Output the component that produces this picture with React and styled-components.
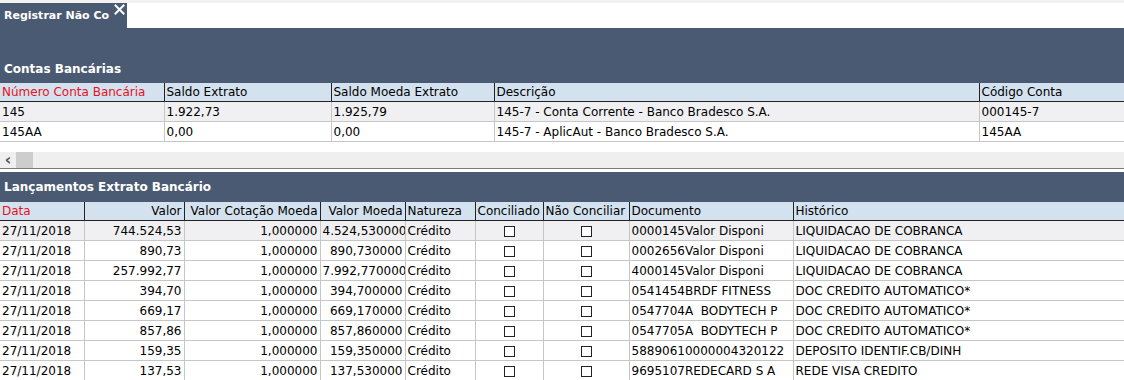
import React from 'react';
import styled, { createGlobalStyle } from 'styled-components';

const GlobalStyle = createGlobalStyle`
  body {
    margin: 0;
    background: #ffffff;
    font-family: 'DejaVu Sans', 'Noto Sans', sans-serif;
    color: #000;
  }
`;

const contas = [
  ['145', '1.922,73', '1.925,79', '145-7 - Conta Corrente - Banco Bradesco S.A.', '000145-7'],
  ['145AA', '0,00', '0,00', '145-7 - AplicAut - Banco Bradesco S.A.', '145AA'],
];

const lancamentos = [
  ['744.524,53', '4.524,530000', '0000145Valor Disponi', 'LIQUIDACAO DE COBRANCA'],
  ['890,73', '890,730000', '0002656Valor Disponi', 'LIQUIDACAO DE COBRANCA'],
  ['257.992,77', '7.992,770000', '4000145Valor Disponi', 'LIQUIDACAO DE COBRANCA'],
  ['394,70', '394,700000', '0541454BRDF FITNESS', 'DOC CREDITO AUTOMATICO*'],
  ['669,17', '669,170000', '0547704A  BODYTECH P', 'DOC CREDITO AUTOMATICO*'],
  ['857,86', '857,860000', '0547705A  BODYTECH P', 'DOC CREDITO AUTOMATICO*'],
  ['159,35', '159,350000', '58890610000004320122', 'DEPOSITO IDENTIF.CB/DINH'],
  ['137,53', '137,530000', '9695107REDECARD S A', 'REDE VISA CREDITO'],
];

function CloseIcon() {
  return (
    <svg width="11" height="11" viewBox="0 0 11 11">
      <path d="M1.5 1.5 L9.5 9.5 M9.5 1.5 L1.5 9.5" stroke="#fff" strokeWidth="2" strokeLinecap="square" />
    </svg>
  );
}

function App() {
  return (
    <>
      <GlobalStyle />
      <Page>
        <TabStrip>
          <Tab>
            <TabLabel>Registrar Não Co</TabLabel>
            <Close>
              <CloseIcon />
            </Close>
          </Tab>
        </TabStrip>
        <Toolbar />
        <SectionTitle>Contas Bancárias</SectionTitle>
        <Grid>
          <colgroup>
            <col style={{ width: 164 }} />
            <col style={{ width: 167 }} />
            <col style={{ width: 163 }} />
            <col style={{ width: 485 }} />
            <col />
          </colgroup>
          <thead>
            <tr>
              <Th $key>Número Conta Bancária</Th>
              <Th>Saldo Extrato</Th>
              <Th>Saldo Moeda Extrato</Th>
              <Th>Descrição</Th>
              <Th>Código Conta</Th>
            </tr>
          </thead>
          <tbody>
            {contas.map((row, i) => (
              <Tr key={i} $active={i === 0}>
                {row.map((cell, j) => (
                  <Td key={j}>{cell}</Td>
                ))}
              </Tr>
            ))}
          </tbody>
        </Grid>
        <ScrollArea>
          <ScrollBar>
            <Arrow>‹</Arrow>
            <Thumb />
          </ScrollBar>
        </ScrollArea>
        <SectionTitle $tall>Lançamentos Extrato Bancário</SectionTitle>
        <Grid>
          <colgroup>
            <col style={{ width: 84 }} />
            <col style={{ width: 100 }} />
            <col style={{ width: 136 }} />
            <col style={{ width: 85 }} />
            <col style={{ width: 70 }} />
            <col style={{ width: 68 }} />
            <col style={{ width: 86 }} />
            <col style={{ width: 164 }} />
            <col />
          </colgroup>
          <thead>
            <tr>
              <Th $key>Data</Th>
              <Th $align="right">Valor</Th>
              <Th $align="right">Valor Cotação Moeda</Th>
              <Th $align="right">Valor Moeda</Th>
              <Th>Natureza</Th>
              <Th>Conciliado</Th>
              <Th>Não Conciliar</Th>
              <Th>Documento</Th>
              <Th>Histórico</Th>
            </tr>
          </thead>
          <tbody>
            {lancamentos.map((row, i) => (
              <Tr key={i} $active={i === 0}>
                <Td>27/11/2018</Td>
                <Td $align="right">{row[0]}</Td>
                <Td $align="right">1,000000</Td>
                <Td $align="right">{row[1]}</Td>
                <Td>Crédito</Td>
                <Td $align="center"><Check /></Td>
                <Td $align="center"><Check /></Td>
                <Td>{row[2]}</Td>
                <Td>{row[3]}</Td>
              </Tr>
            ))}
          </tbody>
        </Grid>
      </Page>
    </>
  );
}

export default App;

const Page = styled.div`
  width: 1124px;
  height: 380px;
  overflow: hidden;
`;

const TabStrip = styled.div`
  height: 25px;
  padding-top: 3px;
  background: linear-gradient(#f2f2f2 0 3px, #ffffff 3px);
  display: flex;
`;

const Tab = styled.div`
  width: 127px;
  background: #4a5a73;
  color: #ffffff;
  display: flex;
  align-items: flex-start;
  justify-content: space-between;
  padding: 0 2px 0 4px;
  box-sizing: border-box;
`;

const TabLabel = styled.span`
  font-size: 11px;
  font-weight: bold;
  margin-top: 6px;
  white-space: nowrap;
`;

const Close = styled.span`
  display: flex;
  margin-top: 1px;
`;

const Toolbar = styled.div`
  height: 30px;
  background: #4a5a73;
`;

const SectionTitle = styled.div`
  background: #4a5a73;
  color: #ffffff;
  font-size: 12px;
  font-weight: bold;
  height: ${(p) => (p.$tall ? '30px' : '25px')};
  line-height: ${(p) => (p.$tall ? '30px' : '23px')};
  padding-left: 4px;
  box-sizing: border-box;
`;

const Grid = styled.table`
  width: 1124px;
  table-layout: fixed;
  border-collapse: collapse;
  font-size: 12px;
`;

const Th = styled.th`
  background: #d3e2ee;
  color: ${(p) => (p.$key ? '#e8111e' : '#000')};
  font-weight: normal;
  text-align: ${(p) => p.$align || 'left'};
  height: 18px;
  padding: 0 2px;
  border-right: 1px solid #222;
  border-bottom: 1px solid #222;
  white-space: nowrap;
  overflow: hidden;
  &:last-child {
    border-right: none;
  }
`;

const Tr = styled.tr`
  background: ${(p) => (p.$active ? '#f0f0f2' : '#ffffff')};
`;

const Td = styled.td`
  height: 19px;
  padding: 0 2px;
  text-align: ${(p) => p.$align || 'left'};
  border-right: 1px solid #c6c6c6;
  border-bottom: 1px solid #c6c6c6;
  white-space: pre;
  overflow: hidden;
  &:last-child {
    border-right: none;
  }
`;

const Check = styled.span`
  display: inline-block;
  width: 9px;
  height: 9px;
  border: 1px solid #222;
  background: #fff;
  vertical-align: middle;
`;

const ScrollArea = styled.div`
  padding-top: 10px;
  background: #ffffff;
  border-bottom: 1px solid #7a7a7a;
  margin-bottom: 3px;
`;

const ScrollBar = styled.div`
  height: 16px;
  background: #efefef;
  display: flex;
  align-items: center;
`;

const Arrow = styled.span`
  width: 16px;
  text-align: center;
  font-size: 16px;
  font-weight: bold;
  color: #555;
  line-height: 16px;
`;

const Thumb = styled.div`
  width: 17px;
  height: 16px;
  background: #cdcdcd;
`;
